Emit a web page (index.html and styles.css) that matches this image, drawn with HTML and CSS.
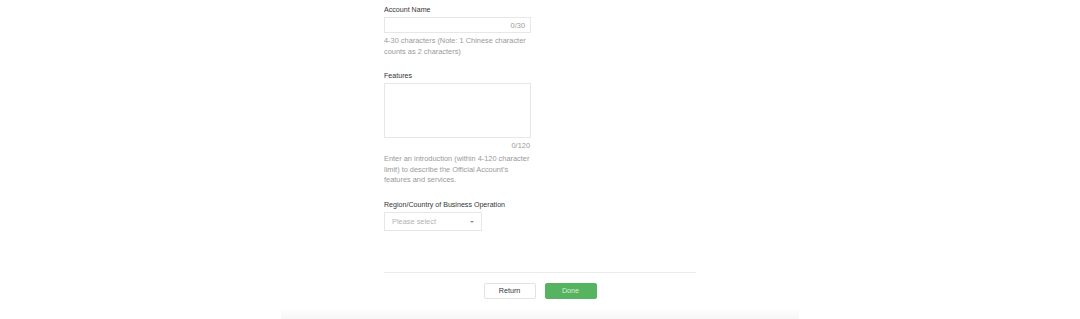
FILE: index.html
```html
<!DOCTYPE html>
<html lang="en">
<head>
  <meta charset="UTF-8" />
  <meta name="viewport" content="width=device-width, initial-scale=1.0"/>
  <title>Official Account - Basic Info</title>
  <link rel="stylesheet" href="styles.css">
</head>
<body>

  <div class="card">
    <form class="info-form">

      <div class="field">
        <label class="field-label">Account Name</label>
        <div class="input-box">
          <input type="text" class="text-input">
          <span class="counter">0/30</span>
        </div>
        <p class="tips">4-30 characters (Note: 1 Chinese character counts as 2 characters)</p>
      </div>

      <div class="field">
        <label class="field-label">Features</label>
        <textarea class="text-area"></textarea>
        <div class="area-counter">0/120</div>
        <p class="tips">Enter an introduction (within 4-120 character limit) to describe the Official Account's features and services.</p>
      </div>

      <div class="field">
        <label class="field-label">Region/Country of Business Operation</label>
        <div class="select-box">
          <span class="placeholder">Please select</span>
          <span class="caret"></span>
        </div>
      </div>

    </form>

    <div class="footer">
      <button class="btn btn-default">Return</button>
      <button class="btn btn-primary">Done</button>
    </div>
  </div>

</body>
</html>
```

FILE: styles.css
```css
body {
  margin: 0;
  background-color: #fff;
  font-family: "Liberation Sans", Arial, sans-serif;
  color: #353535;
}

.card {
  width: 312px;
  margin: 0 auto;
  padding: 5px 103px 21px;
  background: linear-gradient(to bottom, #fff 0, #fff calc(100% - 12px), #f5f5f5 100%);
}

.info-form {
  width: 147px;
}

.field {
  margin-bottom: 14px;
}

.field-label {
  display: block;
  font-size: 7.1px;
  line-height: 11px;
  margin-bottom: 1px;
}

.input-box {
  display: flex;
  align-items: center;
  height: 14px;
  border: 1px solid #e7e7e7;
  padding: 0 5px 0 4px;
}

.text-input {
  flex: 1;
  min-width: 0;
  border: none;
  outline: none;
  padding: 0;
  font-size: 7px;
  background: transparent;
}

.counter,
.area-counter {
  font-size: 7.4px;
  color: #9a9a9a;
}

.text-area {
  display: block;
  box-sizing: border-box;
  width: 147px;
  height: 55px;
  border: 1px solid #e7e7e7;
  resize: none;
  outline: none;
  margin: 0;
}

.area-counter {
  text-align: right;
  line-height: 11px;
  margin-top: 2px;
  padding-right: 1px;
}

.tips {
  margin: 3px 0 0;
  font-size: 7.4px;
  line-height: 10.5px;
  color: #9a9a9a;
}

.select-box {
  position: relative;
  display: flex;
  align-items: center;
  box-sizing: border-box;
  width: 98px;
  height: 19px;
  border: 1px solid #e7e7e7;
  padding-left: 7px;
  margin-top: 1px;
}

.placeholder {
  font-size: 7.4px;
  color: #b2b2b2;
}

.caret {
  position: absolute;
  right: 7px;
  top: 8px;
  border-left: 2px solid transparent;
  border-right: 2px solid transparent;
  border-top: 2px solid #8d8d8d;
}

.footer {
  margin-top: 41px;
  border-top: 1px solid #ececec;
  padding-top: 10px;
  display: flex;
  justify-content: center;
  gap: 9px;
}

.btn {
  width: 52px;
  height: 16px;
  padding: 0;
  border-radius: 2px;
  font-family: "Liberation Sans", Arial, sans-serif;
  font-size: 7.2px;
  cursor: pointer;
}

.btn-default {
  background-color: #fff;
  border: 1px solid #e2e2e2;
  color: #353535;
}

.btn-primary {
  background-color: #56b35f;
  border: 1px solid #56b35f;
  color: #d6eed8;
}
```
